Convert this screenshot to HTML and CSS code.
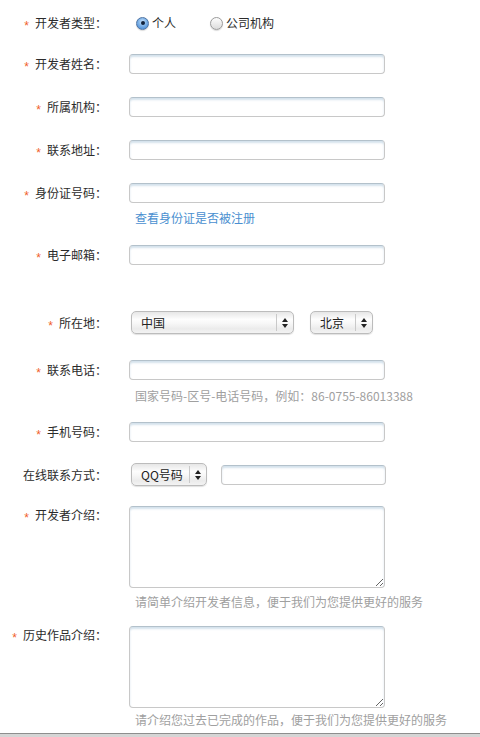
FILE: index.html
```html
<!DOCTYPE html>
<html lang="zh-CN">
<head>
<meta charset="utf-8">
<title>开发者信息</title>
<link rel="stylesheet" href="styles.css">
</head>
<body>
<div class="page">
  <form class="form">
    <div class="row r1">
      <label class="lbl"><span class="req">*</span>开发者类型：</label>
      <div class="ctl radios">
        <label class="opt"><input type="radio" name="dtype" checked>个人</label>
        <label class="opt opt2"><input type="radio" name="dtype">公司机构</label>
      </div>
    </div>
    <div class="row r2">
      <label class="lbl"><span class="req">*</span>开发者姓名：</label>
      <div class="ctl"><input class="inp" type="text"></div>
    </div>
    <div class="row r3">
      <label class="lbl"><span class="req">*</span>所属机构：</label>
      <div class="ctl"><input class="inp" type="text"></div>
    </div>
    <div class="row r3">
      <label class="lbl"><span class="req">*</span>联系地址：</label>
      <div class="ctl"><input class="inp" type="text"></div>
    </div>
    <div class="row r3">
      <label class="lbl"><span class="req">*</span>身份证号码：</label>
      <div class="ctl">
        <input class="inp" type="text">
        <a class="link" href="#">查看身份证是否被注册</a>
      </div>
    </div>
    <div class="row r6">
      <label class="lbl"><span class="req">*</span>电子邮箱：</label>
      <div class="ctl"><input class="inp" type="text"></div>
    </div>
    <div class="row r7">
      <label class="lbl lbl-sel"><span class="req">*</span>所在地：</label>
      <div class="ctl sels">
        <span class="sel sel-country">
          <select><option>中国</option></select>
          <span class="arr"><svg width="6" height="10" viewBox="0 0 6 10"><polygon points="0,4 3,0 6,4" fill="#222"/><polygon points="0,6 3,10 6,6" fill="#222"/></svg></span>
        </span>
        <span class="sel sel-city">
          <select><option>北京</option></select>
          <span class="arr"><svg width="6" height="10" viewBox="0 0 6 10"><polygon points="0,4 3,0 6,4" fill="#222"/><polygon points="0,6 3,10 6,6" fill="#222"/></svg></span>
        </span>
      </div>
    </div>
    <div class="row r8">
      <label class="lbl"><span class="req">*</span>联系电话：</label>
      <div class="ctl">
        <input class="inp" type="text">
        <div class="hint hint-phone">国家号码-区号-电话号码，例如：86-0755-86013388</div>
      </div>
    </div>
    <div class="row r9">
      <label class="lbl"><span class="req">*</span>手机号码：</label>
      <div class="ctl"><input class="inp" type="text"></div>
    </div>
    <div class="row r10">
      <label class="lbl lbl-sel">在线联系方式：</label>
      <div class="ctl sels">
        <span class="sel sel-im">
          <select><option>QQ号码</option></select>
          <span class="arr"><svg width="6" height="10" viewBox="0 0 6 10"><polygon points="0,4 3,0 6,4" fill="#222"/><polygon points="0,6 3,10 6,6" fill="#222"/></svg></span>
        </span>
        <input class="inp inp-im" type="text">
      </div>
    </div>
    <div class="row r11">
      <label class="lbl lbl-ta"><span class="req">*</span>开发者介绍：</label>
      <div class="ctl">
        <textarea class="inp ta"></textarea>
        <div class="hint hint-ta1">请简单介绍开发者信息，便于我们为您提供更好的服务</div>
      </div>
    </div>
    <div class="row r12">
      <label class="lbl lbl-ta"><span class="req">*</span>历史作品介绍：</label>
      <div class="ctl">
        <textarea class="inp ta"></textarea>
        <div class="hint hint-ta2">请介绍您过去已完成的作品，便于我们为您提供更好的服务</div>
      </div>
    </div>
  </form>
  <div class="bar"></div>
</div>
</body>
</html>
```

FILE: styles.css
```css
* { box-sizing: border-box; }

html, body {
  margin: 0;
  padding: 0;
  background: #fff;
}

body {
  font: 12px/1.5 "Noto Sans CJK SC", "Noto Sans", sans-serif;
  color: #2b2b2b;
}

.page {
  height: 737px;
  display: flex;
  flex-direction: column;
  overflow: hidden;
}

.form {
  flex: 1;
  margin: 0;
  padding-top: 13px;
}

.row {
  display: flex;
  align-items: flex-start;
}

.r2 { margin-top: 21px; }
.r3 { margin-top: 23px; }
.r6 { margin-top: 19px; }
.r7 { margin-top: 46px; }
.r8 { margin-top: 26px; }
.r9 { margin-top: 18px; }
.r10 { margin-top: 21px; }
.r11 { margin-top: 20px; }
.r12 { margin-top: 16px; }

.lbl {
  flex: none;
  display: block;
  width: 107px;
  height: 20px;
  text-align: right;
  line-height: 20px;
  color: #2b2b2b;
  white-space: nowrap;
}

.lbl-sel { height: 23px; line-height: 23px; }
.lbl-ta { height: 18px; line-height: 18px; }

.req {
  font-family: "Liberation Sans", Arial, sans-serif;
  color: #f0602a;
  font-size: 12px;
  line-height: 0;
  margin-right: 6px;
  position: relative;
  top: 2px;
}

.ctl {
  margin-left: 22px;
  display: flex;
  flex-direction: column;
  align-items: flex-start;
}

/* radios */
.radios {
  flex-direction: row;
  align-items: center;
  height: 20px;
  padding-left: 7px;
}

.opt {
  display: inline-flex;
  align-items: center;
  gap: 3px;
  height: 20px;
  line-height: 20px;
  color: #2b2b2b;
}

.opt2 { margin-left: 34px; }

.opt input {
  -webkit-appearance: none;
  appearance: none;
  margin: 0;
  width: 13px;
  height: 13px;
  border-radius: 50%;
  border: 1px solid #9b9b9b;
  background: linear-gradient(#fdfdfd, #dcdcdc);
  box-shadow: 0 1px 1px rgba(0, 0, 0, 0.15);
  position: relative;
}

.opt input:checked {
  border-color: #4f74a3;
  background: radial-gradient(circle at 50% 35%, #cfe6fb 0%, #7fb3e8 45%, #3a7fd0 100%);
}

.opt input:checked::after {
  content: "";
  position: absolute;
  left: 3.5px;
  top: 3.5px;
  width: 4px;
  height: 4px;
  border-radius: 50%;
  background: #10213a;
}

/* text inputs */
.inp {
  display: block;
  width: 256px;
  height: 20px;
  margin: 0;
  padding: 0 4px;
  border: 1px solid #c8c8c8;
  border-top-color: #b3c1cb;
  border-radius: 4px;
  background: #fff;
  box-shadow: inset 0 2px 2px rgba(160, 190, 212, 0.45);
  font: inherit;
  color: #333;
  outline: none;
}

.ta {
  height: 82px;
  resize: both;
  padding: 3px 4px;
}

.link {
  display: block;
  height: 16px;
  margin: 7px 0 0 6px;
  line-height: 16px;
  color: #4a8fd0;
  text-decoration: none;
}

.hint {
  height: 16px;
  margin-left: 6px;
  line-height: 16px;
  color: #a0a0a0;
  white-space: nowrap;
}

.hint-phone { margin-top: 8px; }
.hint-ta1 { margin-top: 6px; }
.hint-ta2 { margin-top: 4px; }

/* selects */
.sels {
  flex-direction: row;
  align-items: flex-start;
  padding-left: 2px;
}

.sel {
  position: relative;
  display: block;
  height: 23px;
  border: 1px solid #bcbcbc;
  border-radius: 5px;
  background: linear-gradient(#e6e6e6 0%, #fdfdfd 35%, #f7f7f7 55%, #ebebeb 80%, #f3f3f3 100%);
  box-shadow: 0 1px 1px rgba(0, 0, 0, 0.12);
}

.sel select {
  -webkit-appearance: none;
  appearance: none;
  display: block;
  width: 100%;
  height: 21px;
  margin: 0;
  padding: 0 0 0 9px;
  border: 0;
  background: transparent;
  font: inherit;
  color: #222;
  outline: none;
}

.sel .arr {
  position: absolute;
  right: 0;
  top: 2px;
  bottom: 2px;
  width: 17px;
  border-left: 1px solid #c9c9c9;
  display: flex;
  align-items: center;
  justify-content: center;
  pointer-events: none;
}

.sel-country { width: 163px; }
.sel-city { width: 63px; margin-left: 16px; }
.sel-im { width: 76px; }

.inp-im {
  width: 165px;
  margin-left: 14px;
  margin-top: 2px;
}

.bar {
  flex: none;
  height: 4px;
  border-top: 1px solid #8e8e8e;
  background: #d5d5d5;
}
```
